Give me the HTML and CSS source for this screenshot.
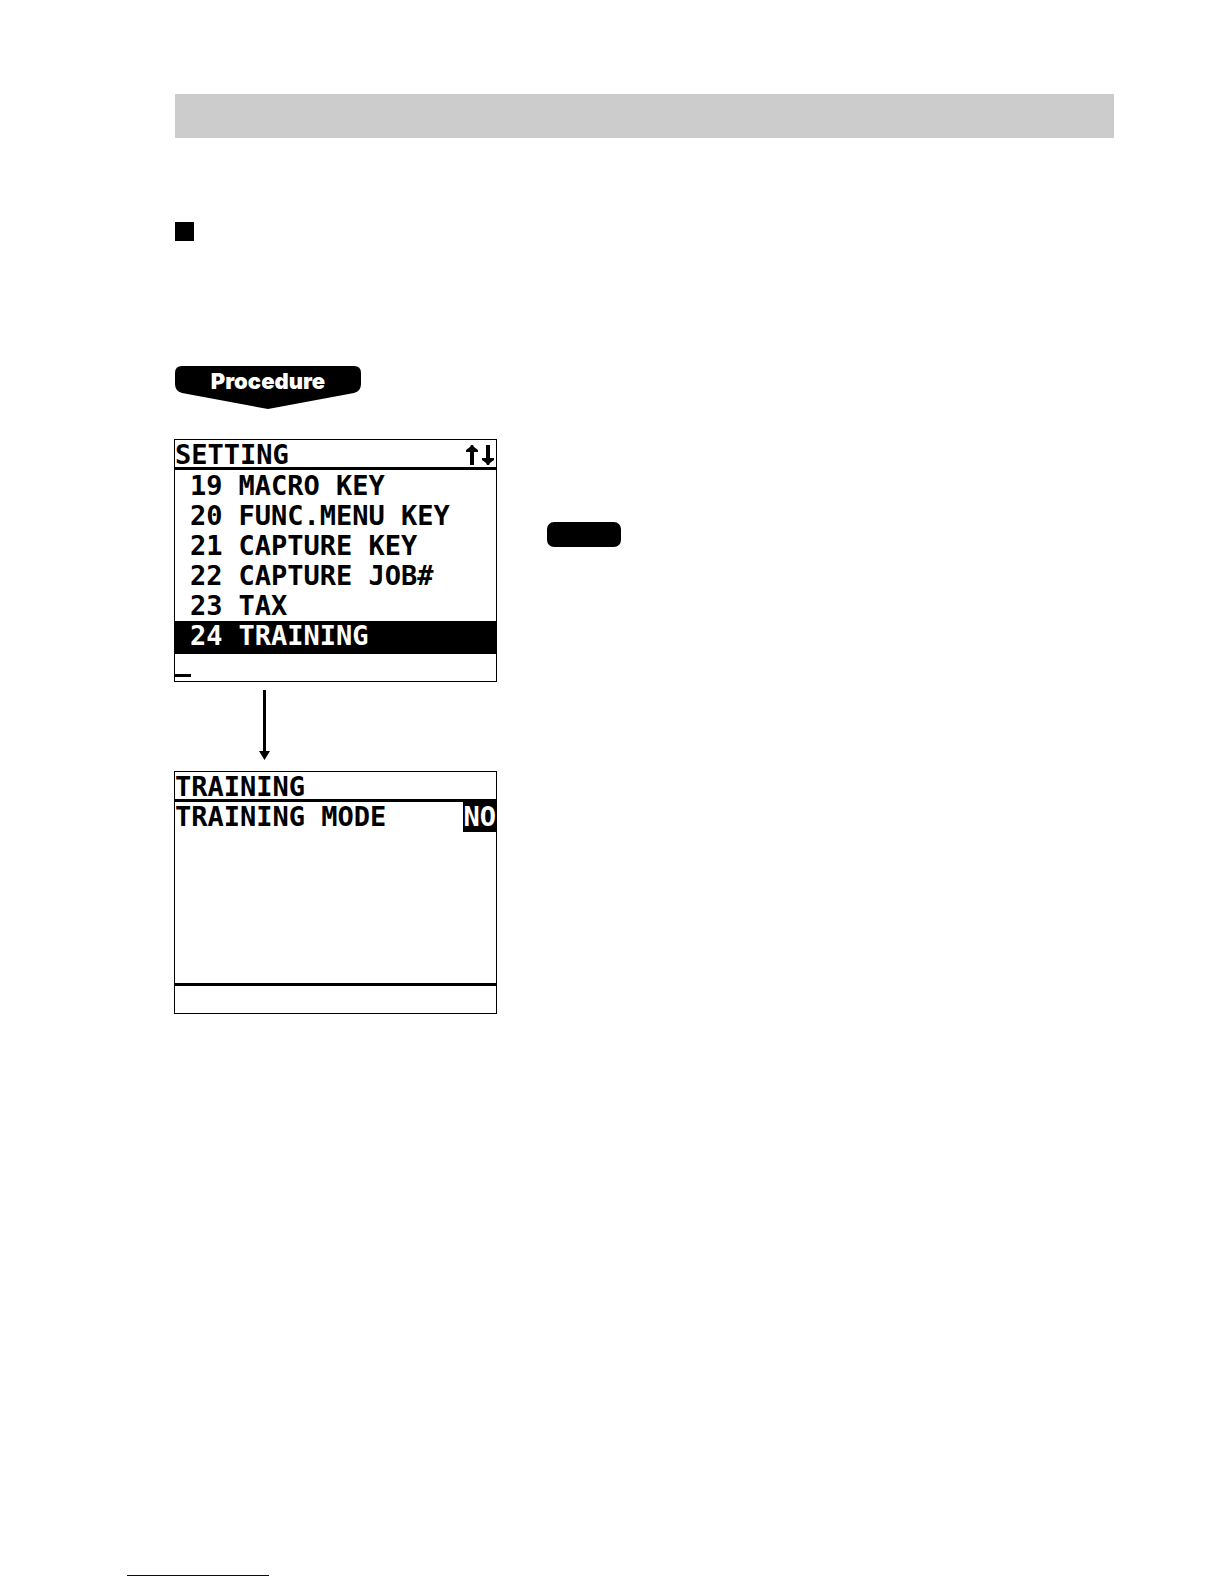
FILE: index.html
```html
<!DOCTYPE html>
<html lang="en">
<head>
  <meta charset="UTF-8" />
  <meta name="viewport" content="width=device-width, initial-scale=1.0"/>
  <title>Training</title>
  <link rel="stylesheet" href="styles.css">
</head>
<body>

<main class="page">
  <div class="title-bar"></div>
  <div class="section-mark"></div>

  <h2 class="procedure">
    <svg class="procedure-shape" viewBox="0 0 186 43" aria-hidden="true">
      <path d="M7 0H179Q186 0 186 7V18Q186 25 179 27L93 43L7 27Q0 25 0 18V7Q0 0 7 0Z"/>
    </svg>
    <span class="procedure-text">Procedure</span>
  </h2>

  <div class="content">
    <div class="steps">
      <!-- SETTING MENU -->
      <section class="screen">
        <header class="screen-head">
          <span>SETTING</span>
          <svg class="scroll-arrows" width="28" height="20" viewBox="0 0 28 20" aria-hidden="true">
            <path d="M5 0H7L8 2L12 5V7H8V20H4V7H0V5L4 2Z"/>
            <path d="M20 0H24V13H28V15L24 18L23 20H21L20 18L16 15V13H20Z"/>
          </svg>
        </header>
        <ul class="menu">
          <li><span>19</span><span>MACRO KEY</span></li>
          <li><span>20</span><span>FUNC.MENU KEY</span></li>
          <li><span>21</span><span>CAPTURE KEY</span></li>
          <li><span>22</span><span>CAPTURE JOB#</span></li>
          <li><span>23</span><span>TAX</span></li>
          <li class="selected"><span>24</span><span>TRAINING</span></li>
        </ul>
        <div class="screen-foot"><span class="cursor"></span></div>
      </section>

      <svg class="step-arrow" width="11" height="70" viewBox="0 0 11 70" aria-hidden="true">
        <path d="M4 0H7V61H11L5.5 70L0 61H4Z"/>
      </svg>

      <!-- TRAINING -->
      <section class="screen">
        <header class="screen-head">
          <span>TRAINING</span>
        </header>
        <div class="fields">
          <div class="field">
            <span>TRAINING MODE</span>
            <span class="value">NO</span>
          </div>
        </div>
        <div class="screen-foot"></div>
      </section>
    </div>

    <div class="notes">
      <div class="note-label"></div>
    </div>
  </div>

  <div class="footer-line"></div>
</main>

</body>
</html>
```
FILE: styles.css
```css
* {
  box-sizing: border-box;
}

body {
  margin: 0;
  background: #fff;
  color: #000;
}

.page {
  padding: 94px 110px 8px 175px;
}

.title-bar {
  height: 44px;
  background: #ccc;
}

.section-mark {
  width: 19px;
  height: 19px;
  margin-top: 84px;
  background: #000;
}

.procedure {
  display: grid;
  width: 186px;
  margin: 125px 0 30px;
  font: 900 22px/30px Inter, "Liberation Sans", sans-serif;
  color: #fff;
  text-align: center;
}

.procedure-shape,
.procedure-text {
  grid-area: 1 / 1;
}

.procedure-shape {
  width: 100%;
  fill: #000;
}

.content {
  display: flex;
  gap: 50px;
  margin-left: -1px;
}

.steps {
  width: 323px;
}

.screen {
  border: 1px solid #000;
  font: bold 27px/30px "DejaVu Sans Mono", "Liberation Mono", monospace;
}

.screen-head {
  display: flex;
  justify-content: space-between;
  height: 30px;
  border-bottom: 3px solid #000;
}

.scroll-arrows {
  margin: 5px 2px 0 0;
}

.menu {
  list-style: none;
  margin: 0;
  padding: 1px 0 0;
}

.menu li {
  display: flex;
  gap: 16px;
  padding-left: 15px;
}

.menu .selected {
  border-bottom: 3px solid #000;
  background: #000;
  color: #fff;
}

.screen-foot {
  display: flex;
  align-items: flex-end;
  height: 27px;
}

.cursor {
  width: 16px;
  height: 3px;
  margin-bottom: 4px;
  background: #000;
}

.step-arrow {
  display: block;
  margin: 8px 0 11px 85px;
}

.fields {
  height: 184px;
  border-bottom: 3px solid #000;
}

.field {
  display: flex;
  justify-content: space-between;
}

.value {
  background: #000;
  color: #fff;
}

.notes {
  flex: 1;
  padding-top: 83px;
}

.note-label {
  width: 74px;
  height: 25px;
  border-radius: 7px;
  background: #000;
}

.footer-line {
  width: 142px;
  height: 1px;
  margin: 561px 0 0 -48px;
  background: #00007f;
}
```
